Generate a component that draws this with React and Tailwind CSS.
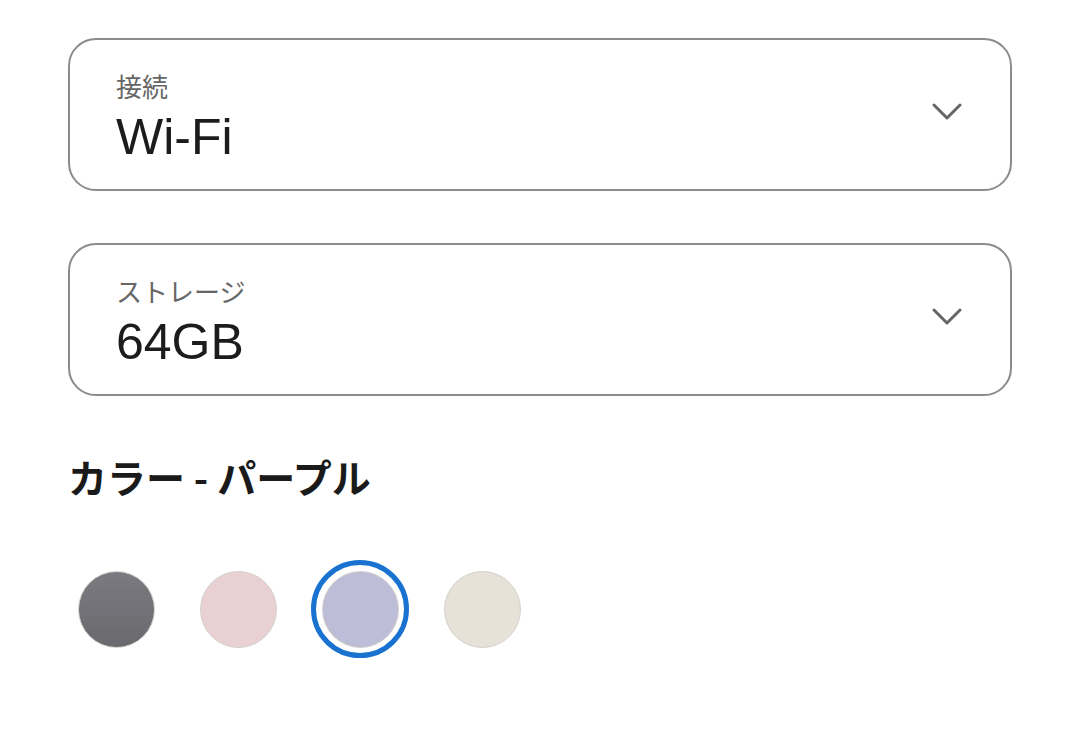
import React from "react";

const font = { fontFamily: '"Liberation Sans", "Noto Sans CJK JP", sans-serif' };

const Chevron = () => (
  <svg width="30" height="17" viewBox="0 0 30 17" fill="none">
    <path d="M2 2 L15 15 L28 2" stroke="#666666" strokeWidth="3" strokeLinecap="round" strokeLinejoin="round" />
  </svg>
);

const SelectBox = ({ label, value }) => (
  <div className="h-[153px] w-[944px] rounded-[28px] border-2 border-[#8c8c8c] pl-[46px] pr-[48px] flex items-center justify-between">
    <div className="flex flex-col pt-[8px]">
      <span className="text-[26px] leading-[30px] text-[#666666] font-['Noto_Sans_CJK_JP']">{label}</span>
      <span className="text-[50px] leading-[60px] text-[#1c1c1c] mt-[6px]">{value}</span>
    </div>
    <div className="mb-[6px]">
      <Chevron />
    </div>
  </div>
);

const swatches = [
  { name: "グレー", cls: "bg-gradient-to-b from-[#7b7a80] to-[#6a696e]" },
  { name: "ピンク", cls: "bg-[#e8d0d3]" },
  { name: "パープル", cls: "bg-[#bebdd8]", selected: true },
  { name: "ベージュ", cls: "bg-[#e6e2d8]" },
];

export default function App() {
  return (
    <div className="w-[1080px] h-[733px] bg-white pl-[68px] pt-[38px]" style={font}>
      <div className="flex flex-col gap-[52px]">
        <SelectBox label="接続" value="Wi-Fi" />
        <SelectBox label="ストレージ" value="64GB" />
      </div>
      <h2 className="mt-[54px] text-[39px] leading-[52px] font-bold text-[#1a1a1a] font-['Noto_Sans_CJK_JP']">
        カラー - パープル
      </h2>
      <div className="flex items-center gap-[24px] mt-[58px] ml-[-1px]">
        {swatches.map((s) => (
          <div
            key={s.name}
            className={
              s.selected
                ? "w-[98px] h-[98px] rounded-full border-[5px] border-[#1a72d0] flex items-center justify-center"
                : "w-[98px] h-[98px] rounded-full flex items-center justify-center"
            }
          >
            <div className={`w-[77px] h-[77px] rounded-full border border-[#d4d0cc] ${s.cls}`} />
          </div>
        ))}
      </div>
    </div>
  );
}
